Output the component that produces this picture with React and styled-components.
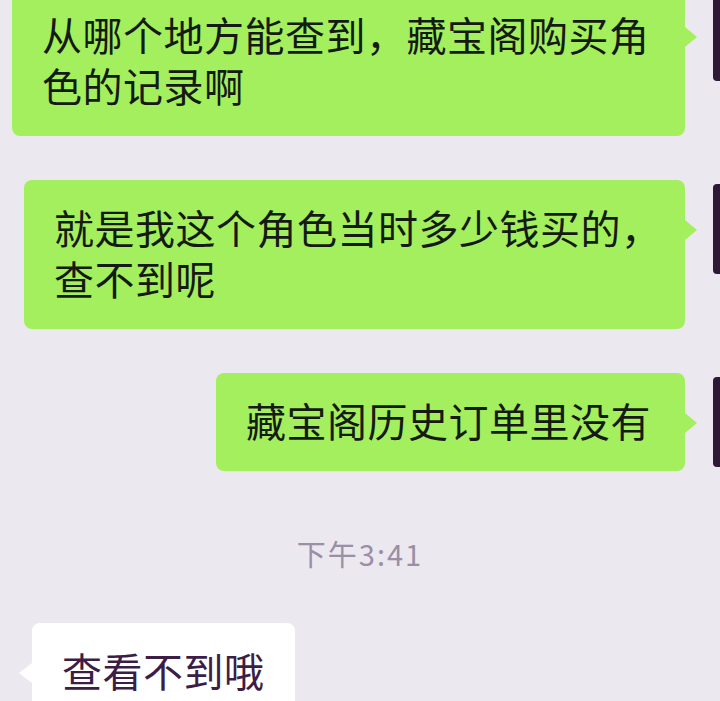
import React from "react";
import styled, { createGlobalStyle } from "styled-components";

const GlobalStyle = createGlobalStyle`
  html, body {
    margin: 0;
    padding: 0;
    background: #ece8f0;
  }
  body {
    font-family: "Noto Sans CJK SC", "Noto Sans", sans-serif;
  }
`;

const Page = styled.div`
  width: 720px;
  height: 701px;
  overflow: hidden;
  background: #ece8f0;
`;

const Chat = styled.div`
  width: 803px;
  margin-top: -13px;
  display: flex;
  flex-direction: column;
  gap: 44px;
`;

const Row = styled.div`
  display: flex;
  align-items: flex-start;
  justify-content: ${(p) => (p.$mine ? "flex-end" : "flex-start")};
  gap: 28px;
  padding-left: ${(p) => (p.$mine ? "0" : "32px")};
`;

const Avatar = styled.div`
  flex: none;
  width: 90px;
  height: 90px;
  margin-top: 4px;
  border-radius: 4px;
  background: #2e1838;
`;

const Bubble = styled.div`
  position: relative;
  box-sizing: border-box;
  width: ${(p) => (p.$width ? `${p.$width}px` : "auto")};
  padding: 22px ${(p) => (p.$mine ? "34px" : "30px")} 25px 30px;
  border-radius: 8px;
  background: ${(p) => (p.$mine ? "#a3ef5d" : "#ffffff")};
  color: ${(p) => (p.$mine ? "#151a12" : "#3b1d45")};
  font-size: 40px;
  line-height: 51px;
  letter-spacing: 0.5px;
  white-space: pre;

  &::after {
    content: "";
    position: absolute;
    top: 40px;
    width: 0;
    height: 0;
    border-top: 10px solid transparent;
    border-bottom: 10px solid transparent;
    ${(p) =>
      p.$mine
        ? `right: -12px; border-left: 12px solid #a3ef5d;`
        : `left: -13px; border-right: 13px solid #ffffff;`}
  }
`;

const Time = styled.div`
  padding: 18px 0 6px;
  text-align: center;
  width: 720px;
  font-size: 29px;
  line-height: 40px;
  letter-spacing: 2px;
  color: #9a8fa6;
`;

const messages = [
  { width: 673, text: "从哪个地方能查到，藏宝阁购买角\n色的记录啊" },
  { width: 661, text: "就是我这个角色当时多少钱买的，\n查不到呢" },
  { text: "藏宝阁历史订单里没有" },
];

export default function App() {
  return (
    <Page>
      <GlobalStyle />
      <Chat>
        {messages.map((m, i) => (
          <Row key={i} $mine>
            <Bubble $mine $width={m.width}>
              {m.text}
            </Bubble>
            <Avatar />
          </Row>
        ))}
        <Time>下午3:41</Time>
        <Row>
          <Bubble>查看不到哦</Bubble>
        </Row>
      </Chat>
    </Page>
  );
}
